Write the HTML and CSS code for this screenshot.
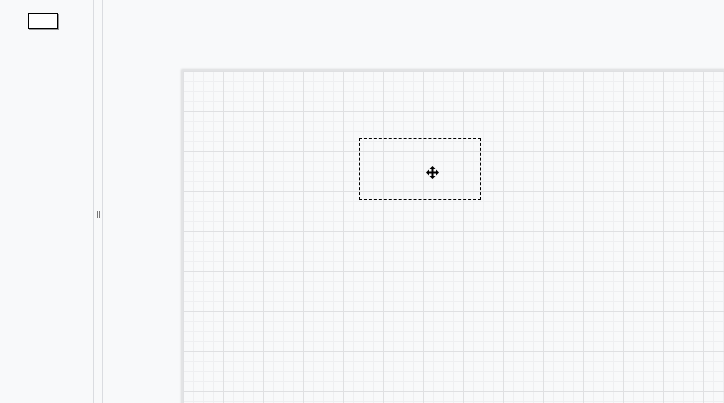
FILE: index.html
```html
<!DOCTYPE html>
<html>
<head>
<meta charset="utf-8">
<link rel="stylesheet" href="styles.css">
</head>
<body>
<div class="app">
  <aside class="sidebar">
    <div class="shape-thumb"></div>
  </aside>
  <div class="splitter"><span class="grip"></span></div>
  <main class="workspace">
    <div class="page">
      <div class="selection">
        <svg class="move" width="13" height="13" viewBox="0 0 13 13">
          <path d="M6.5 0 L9.5 3 H7.5 V5.5 H10 V3.5 L13 6.5 L10 9.5 V7.5 H7.5 V10 H9.5 L6.5 13 L3.5 10 H5.5 V7.5 H3 V9.5 L0 6.5 L3 3.5 V5.5 H5.5 V3 H3.5 Z" fill="#000"/>
        </svg>
      </div>
    </div>
  </main>
</div>
</body>
</html>
```
FILE: styles.css
```css
html, body {
  margin: 0;
  padding: 0;
  width: 724px;
  height: 403px;
  overflow: hidden;
  background: #f8f9fa;
  font-family: "Liberation Sans", Arial, sans-serif;
}
.app {
  display: flex;
  height: 403px;
}
.sidebar {
  flex: none;
  border-right: 1px solid #dadce0;
  background: #f8f9fa;
  box-sizing: border-box;
  width: 94px;
  padding: 13px 0 0 28px;
}
.shape-thumb {
  width: 30px;
  height: 16px;
  box-sizing: border-box;
  border: 1.5px solid #000;
  background: #fff;
  box-shadow: 1px 1px 0 rgba(0,0,0,0.4);
}
.splitter {
  width: 9px;
  flex: none;
  box-sizing: border-box;
  border-right: 1px solid #dadce0;
  display: flex;
  align-items: center;
  justify-content: center;
  padding-left: 1px;
}
.grip {
  width: 3px;
  height: 7px;
  border-left: 1px solid #777;
  border-right: 1px solid #777;
  box-sizing: border-box;
  margin-top: 25px;
}
.workspace {
  flex: 1;
  padding: 71px 0 0 80px;
  overflow: hidden;
}
.page {
  position: relative;
  height: 400px;
  width: 600px;
  background-color: #f8f9fa;
  box-shadow: -1px -1px 2px rgba(0,0,0,0.12);
  background-image:
    linear-gradient(to right, #dfe0e2 1px, transparent 1px),
    linear-gradient(to bottom, #dfe0e2 1px, transparent 1px),
    linear-gradient(to right, #eeeff1 1px, transparent 1px),
    linear-gradient(to bottom, #eeeff1 1px, transparent 1px);
  background-size: 40px 40px, 40px 40px, 10px 10px, 10px 10px;
  border-top: 1px solid #e2e3e5;
  border-left: 1px solid #e2e3e5;
  margin-top: -1px;
  margin-left: -1px;
}
.selection {
  position: absolute;
  left: 176px;
  top: 67px;
  width: 122px;
  height: 62px;
  box-sizing: border-box;
  border: 1px dashed #000;
}
.move {
  position: absolute;
  left: 66px;
  top: 27px;
}
```
